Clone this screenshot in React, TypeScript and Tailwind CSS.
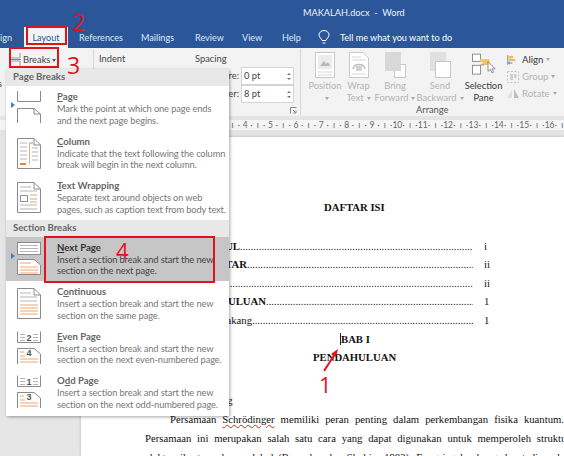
import React from "react";

const UI = "font-['Lato','Open_Sans',sans-serif]";

function IconPage() {
  return (
    <svg width="26" height="34" viewBox="0 0 26 34" fill="none">
      <path d="M2.5 0V10.5H25.5V0" stroke="#8a8a8a" />
      <path d="M2.5 32V17.5H19L25.5 23V32M19 17.5V23H25.5" stroke="#8a8a8a" />
    </svg>
  );
}
function IconColumn() {
  return (
    <svg width="26" height="34" viewBox="0 0 26 34" fill="none">
      <path d="M2.5 32.5V2.5H19L25.5 9V32.5Z" fill="#fff" stroke="#8a8a8a" />
      <path d="M19 2.5V9H25.5" stroke="#8a8a8a" />
      <path d="M5 7H12M5 11H12M5 15H12M5 19H12M5 23H12M17 12H23M17 16H23M17 20H23M17 24H23" stroke="#b5b5b5" />
      <path d="M14.5 7V28" stroke="#e2b07c" />
      <path d="M14.5 7H18" stroke="#e2843c" />
      <path d="M5 28H11" stroke="#e2843c" strokeWidth="2" />
    </svg>
  );
}
function IconWrap() {
  return (
    <svg width="26" height="34" viewBox="0 0 26 34" fill="none">
      <path d="M2.5 32.5V2.5H19L25.5 9V32.5Z" fill="#fff" stroke="#8a8a8a" />
      <path d="M19 2.5V9H25.5" stroke="#8a8a8a" />
      <path d="M5 7H16M5 11H22M5 29H22M5 25H22" stroke="#b5b5b5" />
      <rect x="5.5" y="15.5" width="7" height="6" stroke="#8f8f8f" />
      <path d="M15 15H22M15 19H22M15 22H22" stroke="#e2a56e" />
    </svg>
  );
}
function IconNext() {
  return (
    <svg width="26" height="34" viewBox="0 0 26 34" fill="none">
      <rect x="2.5" y="0.5" width="23" height="12" fill="#fff" stroke="#8a8a8a" />
      <path d="M5 3.5H23M5 6.5H23M5 9.5H23" stroke="#b5b5b5" />
      <path d="M2.5 32.5V17.5H19L25.5 23V32.5Z" fill="#fff" stroke="#8a8a8a" />
      <path d="M5 21H16M5 25H23M5 28H23M5 31H23" stroke="#eda673" />
    </svg>
  );
}
function IconContinuous() {
  return (
    <svg width="26" height="34" viewBox="0 0 26 34" fill="none">
      <path d="M2.5 32.5V2.5H19L25.5 9V32.5Z" fill="#fff" stroke="#8a8a8a" />
      <path d="M19 2.5V9H25.5" stroke="#8a8a8a" />
      <path d="M5 7H16M5 11H22M5 15H22" stroke="#b5b5b5" />
      <path d="M5 19H23M5 22H23M5 25H23M5 28H23" stroke="#eda673" />
    </svg>
  );
}
function IconNumbered({ a, b }: { a: string; b: string }) {
  return (
    <svg width="26" height="34" viewBox="0 0 26 34" fill="none">
      <path d="M2.5 0.5V11.5H25.5V0.5" stroke="#8a8a8a" />
      <path d="M5 3.5H10M5 6.5H10M5 9.5H10M18 3.5H23M18 6.5H23M18 9.5H23" stroke="#b5b5b5" />
      <path d="M2.5 33V17.5H19L25.5 23V33" stroke="#8a8a8a" />
      <path d="M5 21H9M5 25H10M5 28H23M5 31H23" stroke="#eda673" />
      <text x="14" y="10" textAnchor="middle" fontSize="9" fontWeight="700" fill="#555" fontFamily="Liberation Sans, sans-serif">{a}</text>
      <text x="14" y="25" textAnchor="middle" fontSize="9" fontWeight="700" fill="#555" fontFamily="Liberation Sans, sans-serif">{b}</text>
    </svg>
  );
}

function MenuRow({
  icon, title, lines, active, marker,
}: { icon: React.ReactNode; title: [string, string, string]; lines: [string, string]; active?: boolean; marker?: boolean }) {
  return (
    <div className={`relative flex h-[44.5px] ${active ? "bg-[#c6c6c6]" : ""}`}>
      {marker && <span className="absolute left-[5px] top-[16px] h-0 w-0 border-y-[3.5px] border-l-[4px] border-y-transparent border-l-[#4a7ab8]" />}
      <div className="ml-[9px] mt-[5px] h-[36px] w-[26px] shrink-0 overflow-hidden">{icon}</div>
      <div className="ml-[16px] mt-[5px] whitespace-nowrap leading-[11.7px]">
        <div className={`text-[9.6px] font-bold ${active ? "text-[#333]" : "text-[#666]"}`}>
          {title[0]}<span className="underline">{title[1]}</span>{title[2]}
        </div>
        <div className={`mt-[0.5px] text-[9.3px] tracking-[-0.12px] ${active ? "text-[#444]" : "text-[#777]"}`}>{lines[0]}</div>
        <div className={`text-[9.3px] tracking-[-0.12px] ${active ? "text-[#444]" : "text-[#777]"}`}>{lines[1]}</div>
      </div>
    </div>
  );
}

function Menu() {
  return (
    <div className={`absolute left-[6px] top-[69px] z-20 w-[223px] bg-white shadow-[1px_1px_3px_rgba(0,0,0,0.35)] ${UI}`}>
      <div className="flex h-[17px] items-center bg-[#e8e8e8] pl-[7px] text-[9.6px] font-bold text-[#666]">Page Breaks</div>
      <MenuRow icon={<IconPage />} title={["", "P", "age"]} lines={["Mark the point at which one page ends", "and the next page begins."]} marker />
      <MenuRow icon={<IconColumn />} title={["", "C", "olumn"]} lines={["Indicate that the text following the column", "break will begin in the next column."]} />
      <MenuRow icon={<IconWrap />} title={["", "T", "ext Wrapping"]} lines={["Separate text around objects on web", "pages, such as caption text from body text."]} />
      <div className="flex h-[17px] items-center bg-[#e8e8e8] pl-[7px] text-[9.6px] font-bold text-[#666]">Section Breaks</div>
      <MenuRow icon={<IconNext />} title={["", "N", "ext Page"]} lines={["Insert a section break and start the new", "section on the next page."]} active marker />
      <MenuRow icon={<IconContinuous />} title={["C", "o", "ntinuous"]} lines={["Insert a section break and start the new", "section on the same page."]} />
      <MenuRow icon={<IconNumbered a="2" b="4" />} title={["", "E", "ven Page"]} lines={["Insert a section break and start the new", "section on the next even-numbered page."]} />
      <MenuRow icon={<IconNumbered a="1" b="3" />} title={["O", "d", "d Page"]} lines={["Insert a section break and start the new", "section on the next odd-numbered page."]} />
      <div className="h-[1px]" />
    </div>
  );
}

function Spinner() {
  return (
    <div className="flex w-[9px] flex-col items-center gap-[3px]">
      <span className="h-0 w-0 border-x-[2px] border-b-[2px] border-x-transparent border-b-[#777]" />
      <span className="h-0 w-0 border-x-[2px] border-t-[2px] border-x-transparent border-t-[#777]" />
    </div>
  );
}

function NumInput({ label, v }: { label: string; v: string }) {
  return (
    <div className="flex items-center justify-end gap-[2px]">
      <span>{label}</span>
      <div className="flex h-[18px] w-[53px] items-center justify-between border border-[#d4d4d4] bg-white pl-[2px] text-[#444]">
        {v}
        <Spinner />
      </div>
    </div>
  );
}

function Caret() {
  return <span className="ml-[3px] inline-block h-0 w-0 border-x-[2.5px] border-t-[3px] border-x-transparent border-t-[#a8a8a8] align-middle" />;
}

function BigBtn({ w, icon, l1, l2, dark }: { w: string; icon: React.ReactNode; l1: string; l2: React.ReactNode; dark?: boolean }) {
  return (
    <div className={`flex ${w} shrink-0 flex-col items-center whitespace-nowrap pt-[3px] text-[9.3px] leading-[12px] ${dark ? "text-[#3a3a3a]" : "text-[#b4b4b4]"}`}>
      <div className="h-[27px]">{icon}</div>
      <div className="mt-[1px]">{l1}</div>
      <div>{l2}</div>
    </div>
  );
}

function Ribbon() {
  return (
    <div className={`flex h-[67px] bg-[#f3f3f3] ${UI}`}>
      <div className="flex w-[94px] shrink-0 flex-col border-r border-[#d8d8d8] text-[9.3px] text-[#444]">
        <div className="ml-[9px] mt-[3px] flex h-[16px] items-center">
          <svg width="12" height="14" viewBox="0 0 12 14" fill="none">
            <path d="M1 0V5H11V0M1 14V8H11V14" stroke="#9a9a9a" />
            <path d="M0 6.5H12" stroke="#8a8a8a" />
          </svg>
          <span className="ml-[2px]">Breaks</span>
          <span className="ml-[2px] h-0 w-0 border-x-[2.5px] border-t-[3px] border-x-transparent border-t-[#555]" />
        </div>
        <div className="-ml-[2px] mt-[9px]">s</div>
      </div>
      <div className="relative w-[207px] shrink-0 border-r border-[#d8d8d8] text-[9.3px] text-[#444]">
        <div className="flex h-[18px] items-center pl-[5px] pt-[2px]">
          <span className="w-[96px]">Indent</span>
          <span>Spacing</span>
        </div>
        <div className="flex w-[200px] flex-col">
          <NumInput label="Before:" v="0 pt" />
          <NumInput label="After:" v="8 pt" />
        </div>
        <svg className="absolute bottom-[2px] right-[3px]" width="7" height="7" viewBox="0 0 7 7" fill="none">
          <path d="M0.5 6.5V0.5H6.5M3 3L6 6M6 3.5V6H3.5" stroke="#888" />
        </svg>
      </div>
      <div className="flex w-[163px] shrink-0 flex-col items-stretch">
        <div className="flex h-[56px] pl-[5px]">
          <BigBtn w="w-[38px]" l1="Position" l2={<Caret />} icon={
            <svg width="20" height="27" viewBox="0 0 20 27" fill="none"><rect x="0.5" y="0.5" width="19" height="25" fill="#fff" stroke="#c8c8c8" /><path d="M3 3H17V17H3Z" fill="#ececec" /><path d="M5 14L9 9L11 12L13 10L15 14Z" fill="#b8b8b8" /><path d="M3 20H17M3 23H17" stroke="#d6d6d6" /></svg>
          } />
          <BigBtn w="w-[29px]" l1="Wrap" l2={<>Text<Caret /></>} icon={
            <svg width="20" height="27" viewBox="0 0 20 27" fill="none"><path d="M0.5 25.5V0.5H14L19.5 6V25.5Z" fill="#fff" stroke="#c8c8c8" /><path d="M3 5H12M3 8H17M3 22H17" stroke="#d6d6d6" /><path d="M4 17C5 11 15 11 16 17" stroke="#bdbdbd" strokeWidth="1.5" /><rect x="7" y="14" width="6" height="5" fill="#d0d0d0" /></svg>
          } />
          <BigBtn w="w-[44px]" l1="Bring" l2={<>Forward<Caret /></>} icon={
            <svg width="21" height="27" viewBox="0 0 21 27" fill="none"><rect x="9.5" y="12.5" width="11" height="13" fill="#fff" stroke="#c8c8c8" /><rect x="0" y="0" width="16" height="19" fill="#d8d8d8" /></svg>
          } />
          <BigBtn w="w-[46px]" l1="Send" l2={<>Backward<Caret /></>} icon={
            <svg width="21" height="27" viewBox="0 0 21 27" fill="none"><rect x="0" y="0" width="16" height="19" fill="#e0e0e0" /><rect x="5.5" y="9.5" width="15" height="16" fill="#fff" stroke="#c8c8c8" /></svg>
          } />
        </div>
        <div className="pl-[115px] text-[9.3px] leading-[12px] text-[#555]">Arrange</div>
      </div>
      <div className="flex">
        <BigBtn w="w-[39px]" dark l1="Selection" l2="Pane" icon={
          <svg width="24" height="25" viewBox="0 0 30 27" fill="none">
            <rect x="0.5" y="0.5" width="10" height="9" fill="#fff" stroke="#777" />
            <rect x="0.5" y="14.5" width="10" height="11" fill="#fff" stroke="#777" />
            <path d="M10 7H22V14H13V10H10Z" fill="#f2c45c" />
            <path d="M15 14H10.5" stroke="#777" />
            <path d="M20 10V22L23 19.5L25 24L27 23L25 19H29Z" fill="#fff" stroke="#777" />
          </svg>
        } />
        <div className="ml-[4px] flex flex-col pt-[2px] text-[9.6px] leading-[17px]">
          <div className="flex items-center whitespace-nowrap text-[#3a3a3a]">
            <svg className="mr-[3px]" width="9" height="12" viewBox="0 0 12 13" fill="none"><path d="M1 0V13" stroke="#2e75b6" /><rect x="2" y="1" width="6" height="3" fill="#f0b95a" /><rect x="2" y="5" width="9" height="3" fill="#f0b95a" /><path d="M2 10.5H7M2 10.5L4 9M2 10.5L4 12" stroke="#2e75b6" /></svg>
            <span className="ml-[3px]">Align</span><Caret />
          </div>
          <div className="flex items-center whitespace-nowrap text-[#b4b4b4]">
            <svg className="mr-[3px]" width="12" height="12" viewBox="0 0 12 12" fill="none"><rect x="0.5" y="0.5" width="11" height="11" stroke="#c4c4c4" strokeDasharray="2 1.5" /><rect x="3" y="3" width="3" height="6" fill="#d0d0d0" /><rect x="7" y="3" width="2.5" height="4" fill="#d0d0d0" /></svg>
            Group<Caret />
          </div>
          <div className="flex items-center whitespace-nowrap text-[#b4b4b4]">
            <svg className="mr-[2px]" width="13" height="11" viewBox="0 0 13 11" fill="none"><path d="M0 10L5 2V10Z" fill="#e0e0e0" /><path d="M7 1L12 10H7Z" fill="#bdbdbd" /></svg>
            Rotate<Caret />
          </div>
        </div>
      </div>
    </div>
  );
}

function Ruler() {
  const items: string[] = [];
  for (let n = 1; n <= 16; n++) {
    items.push(String(n), "·", "ı", "·");
  }
  return (
    <div className={`flex h-[21px] flex-col bg-[#e4e4e4] pb-[7px] pt-[4px] ${UI}`}>
      <div className="flex h-[10px] w-full items-center overflow-hidden bg-[#f5f5f5] pl-[165.8px] text-[8.5px] leading-none text-[#666]">
        {items.map((t, i) => (
          <span key={i} className="flex w-[6.355px] shrink-0 justify-center whitespace-nowrap">{t}</span>
        ))}
      </div>
    </div>
  );
}

const DOTS = ".".repeat(140);
const toc: { label: string; end: string; num: string }[] = [
  { label: "HALAMAN JUDUL", end: "w-[159px]", num: "i" },
  { label: "KATA PENGANTAR", end: "w-[166px]", num: "ii" },
  { label: "DAFTAR ISI", end: "w-[146px]", num: "ii" },
  { label: "BAB I PENDAHULUAN", end: "w-[185px]", num: "1" },
  { label: "1.1 Latar Belakang", end: "w-[171px]", num: "1" },
];

function Doc() {
  return (
    <div className="h-full flex-1 overflow-hidden bg-white font-['Liberation_Serif',serif] text-[10.7px] leading-[18.6px] text-[#111] shadow-[0_0_3px_rgba(0,0,0,0.2)]">
      <div className="mt-[61px] pl-[243px] font-bold">DAFTAR ISI</div>
      <div className="mt-[20px]">
        {toc.map((r) => (
          <div key={r.label} className="flex h-[18.6px]">
            <div className="flex w-[392px] shrink-0">
              <div className={`${r.end} shrink-0 whitespace-nowrap text-right ${r.label.startsWith("1.1") ? "" : "font-bold"}`}>{r.label}</div>
              <div className="min-w-0 flex-1 overflow-hidden whitespace-nowrap font-normal">{DOTS}</div>
            </div>
            <div className="ml-[11px] font-normal">{r.num}</div>
          </div>
        ))}
      </div>
      <div className="relative pl-[260px] font-bold">
        <span className="absolute left-[259px] top-[3px] h-[12px] w-px bg-[#222]" />
        BAB I
      </div>
      <div className="pl-[232px] font-bold">PENDAHULUAN</div>
      <div className="mt-[24px] pl-[70px]">1.1 Latar Belakang</div>
      <div className="ml-[89px] w-[394px] whitespace-nowrap pt-[1px] [text-align-last:justify]">
        Persamaan <span className="underline decoration-wavy decoration-[#d22] decoration-1">Schrödinger</span> memiliki peran penting dalam perkembangan fisika kuantum.
      </div>
      <div className="ml-[64px] w-[425px] whitespace-nowrap [text-align-last:justify]">
        Persamaan ini merupakan salah satu cara yang dapat digunakan untuk memperoleh struktur
      </div>
      <div className="ml-[64px] w-[425px] whitespace-nowrap [text-align-last:justify]">
        elektronik atom dan molekul (Bransden dan Shokin, 1983). Fungsi gelombang dapat diperoleh
      </div>
    </div>
  );
}

function RedBox({ cls }: { cls: string }) {
  return <div className={`absolute z-30 border-2 border-[#e0131c] ${cls}`} />;
}
function RedNum({ n, cls }: { n: string; cls: string }) {
  return <div className={`absolute z-30 font-['Open_Sans',sans-serif] leading-none text-[#e0131c] ${cls}`}>{n}</div>;
}

export default function App() {
  return (
    <div className={`relative flex h-[456px] w-[564px] flex-col overflow-hidden bg-[#e6e6e6] ${UI}`}>
      <div className="flex h-[27px] items-center bg-[#2b579a] pb-[2px] pl-[303px] text-[9.2px] text-[#eef2f8]">
        MAKALAH.docx&nbsp;&nbsp;-&nbsp;&nbsp;Word
      </div>
      <div className="flex h-[21px] items-center whitespace-nowrap bg-[#2b579a] text-[9.1px] text-[#dfe7f3]">
        <span className="w-[24px] shrink-0 pr-[12px] text-right">ign</span>
        <span className="flex h-[21px] w-[44px] shrink-0 items-center justify-center bg-[#f3f3f3] text-[#2b579a]">Layout</span>
        <span className="ml-[11px] w-[62px] shrink-0">References</span>
        <span className="w-[54px] shrink-0">Mailings</span>
        <span className="w-[47px] shrink-0">Review</span>
        <span className="w-[40px] shrink-0">View</span>
        <span className="w-[33px] shrink-0">Help</span>
        <svg className="ml-[3px]" width="12" height="15" viewBox="0 0 12 15" fill="none">
          <path d="M4 10.5C3.5 8.5 1 7.5 1 5A5 4.5 0 0 1 11 5C11 7.5 8.5 8.5 8 10.5ZM4.5 13H7.5" stroke="#fff" />
        </svg>
        <span className="ml-[10px] text-white">Tell me what you want to do</span>
      </div>
      <div className="h-[1px] bg-[#f3f3f3]" />
      <Ribbon />
      <Ruler />
      <div className="flex min-h-0 flex-1">
        <div className="w-[81px] shrink-0" />
        <Doc />
      </div>

      <Menu />

      <RedBox cls="left-[26px] top-[26px] h-[19px] w-[41px]" />
      <RedBox cls="left-[9px] top-[47px] h-[21px] w-[50px]" />
      <RedBox cls="left-[44px] top-[236px] h-[47px] w-[171px]" />
      <RedNum n="2" cls="left-[72px] top-[11px] text-[23px]" />
      <RedNum n="3" cls="left-[67px] top-[54px] text-[23px]" />
      <RedNum n="4" cls="left-[116px] top-[239px] text-[22px]" />
      <RedNum n="1" cls="left-[319px] top-[373px] text-[22px]" />
      <svg className="absolute left-[320px] top-[346px] z-30" width="22" height="28" viewBox="0 0 22 28" fill="none">
        <path d="M4 25L15 8" stroke="#e0131c" strokeWidth="2" />
        <path d="M18 3L11 8L16 11Z" fill="#e0131c" />
      </svg>
    </div>
  );
}
